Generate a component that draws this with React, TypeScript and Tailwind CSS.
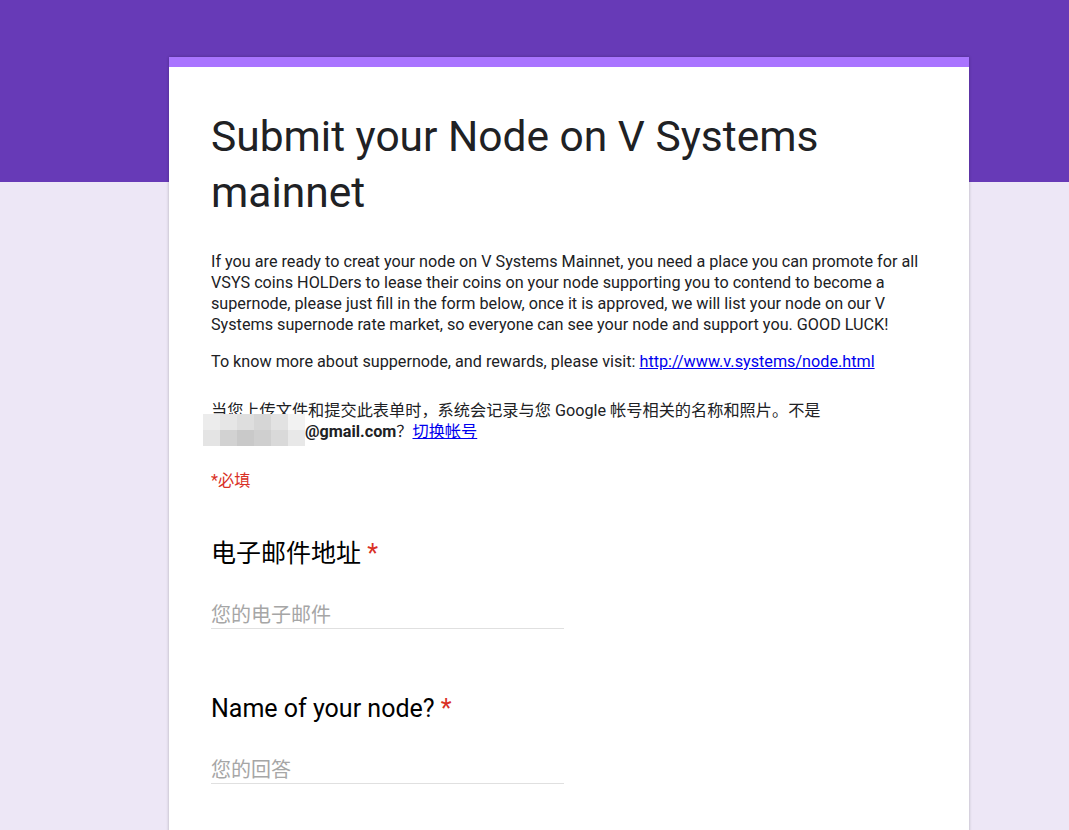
const font = "font-['Roboto','Noto_Sans_CJK_SC',sans-serif]";

const mosaic = [
  ['#ececec', '#e6e6e6', '#dedede', '#d6d6d6', '#e2e2e2', '#f2f2f2'],
  ['#e4e4e4', '#d2d2d2', '#c9c9c9', '#cfcfcf', '#d9d9d9', '#e8e8e8'],
];

function Question({ title, placeholder }: { title: string; placeholder: string }) {
  return (
    <div className="pb-[64px]">
      <div className="text-[25px] leading-[32px] text-[#000]">
        {title} <span className="text-[#d93025]">*</span>
      </div>
      <div className="mt-[32px] w-[353px] border-b border-[#e0e0e0] text-[20px] leading-[26px] text-[#a6a6a6]">
        {placeholder}
      </div>
    </div>
  );
}

export default function App() {
  return (
    <div className={`min-h-[830px] bg-[linear-gradient(#673ab7_0_182px,#ede7f6_182px)] pt-[57px] ${font}`}>
      <div className="ml-[169px] w-[800px] min-h-[773px] border-t-[10px] border-[#a974ff] bg-white px-[42px] pt-[42px] shadow-[0_0_3px_rgba(0,0,0,0.25)]">
        <h1 className="text-[42.5px] leading-[56px] text-[#202124]">
          Submit your Node on V Systems mainnet
        </h1>

        <div className="mt-[30px] text-[16.2px] leading-[21px] text-[#202124]">
          <p>
            If you are ready to creat your node on V Systems Mainnet, you need a place you can promote for all VSYS
            coins HOLDers to lease their coins on your node supporting you to contend to become a supernode, please
            just fill in the form below, once it is approved, we will list your node on our V Systems supernode rate
            market, so everyone can see your node and support you. GOOD LUCK!
          </p>
          <p className="mt-[16px]">
            To know more about suppernode, and rewards, please visit:{' '}
            <a href="#" className="text-[#0000ee] underline">
              http://www.v.systems/node.html
            </a>
          </p>
        </div>

        <div className="relative mt-[28px] text-[16.2px] leading-[21px] text-[#202124]">
          <p>
            当您上传文件和提交此表单时，系统会记录与您 Google 帐号相关的名称和照片。不是
            <br />
            <span className="inline-block w-[94px]" />
            <b>@gmail.com</b>？
            <a href="#" className="text-[#0000ee] underline">
              切换帐号
            </a>
          </p>
          <div className="absolute left-[-8px] top-[14px] flex flex-col">
            {mosaic.map((row, i) => (
              <div key={i} className="flex">
                {row.map((c, j) => (
                  <div key={j} className="h-[16px] w-[17px]" style={{ background: c }} />
                ))}
              </div>
            ))}
          </div>
        </div>

        <div className="mt-[28px] text-[16.2px] leading-[21px] text-[#d93025]">*必填</div>

        <div className="mt-[47px]">
          <Question title="电子邮件地址" placeholder="您的电子邮件" />
          <Question title="Name of your node?" placeholder="您的回答" />
        </div>
      </div>
    </div>
  );
}
